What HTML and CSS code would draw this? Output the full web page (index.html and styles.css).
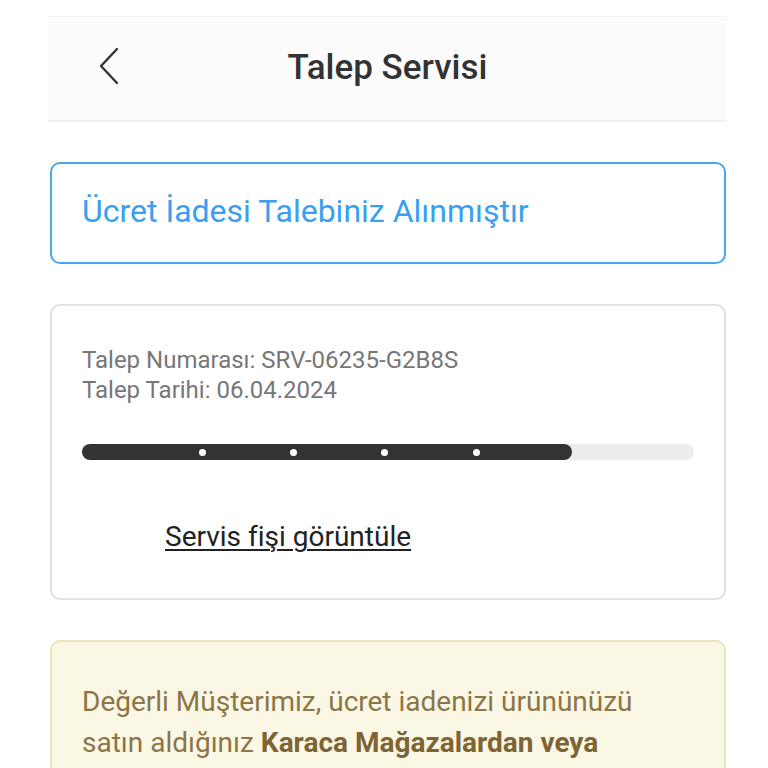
FILE: index.html
```html
<!DOCTYPE html>
<html lang="tr">
<head>
    <meta charset="UTF-8">
    <meta name="viewport" content="width=device-width, initial-scale=1.0">
    <title>Talep Servisi</title>
    <link rel="stylesheet" href="styles.css">
</head>
<body>

    <div class="page">
        <header class="top-bar">
            <a class="back" href="#" aria-label="Geri">
                <svg width="20" height="38" viewBox="0 0 20 38">
                    <polyline points="18,2 2,19 18,36" fill="none" stroke="#333" stroke-width="2.4" stroke-linecap="round" stroke-linejoin="round"/>
                </svg>
            </a>
            <h1>Talep Servisi</h1>
        </header>

        <section class="status-card">
            <h2>Ücret İadesi Talebiniz Alınmıştır</h2>
        </section>

        <section class="request-card">
            <p class="request-info">Talep Numarası: SRV-06235-G2B8S</p>
            <p class="request-info">Talep Tarihi: 06.04.2024</p>

            <div class="progress">
                <div class="progress-fill" style="width: 80%;">
                    <span class="step"></span>
                    <span class="step"></span>
                    <span class="step"></span>
                    <span class="step"></span>
                </div>
            </div>

            <a class="receipt-link" href="#">Servis fişi görüntüle</a>
        </section>

        <section class="notice-card">
            <p>Değerli Müşterimiz, ücret iadenizi ürününüzü satın aldığınız <strong>Karaca Mağazalardan veya</strong> Karaca.com üzerinden talep edebilirsiniz.</p>
        </section>
    </div>

</body>
</html>
```

FILE: styles.css
```css
body {
    font-family: Roboto, 'Noto Sans', sans-serif;
    margin: 0;
    padding: 0;
    background-color: #fff;
    color: #333;
}

.page {
    width: 679px;
    margin-left: 48px;
    padding-top: 16px;
}

/* Header */
.top-bar {
    position: relative;
    height: 103px;
    display: flex;
    align-items: center;
    justify-content: center;
    background-color: #fcfcfc;
    border-top: 1px solid #f3f3f3;
    border-bottom: 2px solid #f1f1f1;
}

.top-bar .back {
    position: absolute;
    left: 51px;
    top: 30px;
    display: block;
    line-height: 0;
}

.top-bar h1 {
    margin: 0 0 2px;
    font-size: 35px;
    font-weight: 500;
    color: #333;
}

/* Cards */
.status-card,
.request-card,
.notice-card {
    margin: 40px 1px 0 2px;
    border-radius: 10px;
    border: 2px solid #e2e2e2;
    background-color: #fff;
}

.status-card {
    height: 98px;
    display: flex;
    align-items: center;
    padding: 0 30px;
    border-color: #49a6ef;
}

.status-card h2 {
    margin: 0 0 4px;
    font-size: 32px;
    font-weight: 400;
    color: #3a9ff0;
}

.request-card {
    padding: 39px 30px 45px;
    display: flex;
    flex-direction: column;
    align-items: flex-start;
}

.request-info {
    margin: 0;
    font-size: 24px;
    line-height: 30px;
    color: #777;
}

.progress {
    align-self: stretch;
    height: 16px;
    margin-top: 39px;
    border-radius: 8px;
    background-color: #ececec;
}

.progress-fill {
    height: 100%;
    border-radius: 8px;
    background-color: #333;
    display: flex;
    align-items: center;
    justify-content: space-between;
    padding: 0 92px 0 117px;
    box-sizing: border-box;
}

.step {
    width: 7px;
    height: 7px;
    border-radius: 50%;
    background-color: #fff;
}

.receipt-link {
    margin: 61px 0 0 83px;
    font-size: 28px;
    line-height: 32px;
    color: #222;
    text-decoration: underline;
    text-underline-offset: 3px;
    text-decoration-thickness: 2px;
}

.notice-card {
    padding: 39px 30px 30px;
    background-color: #fbf7e5;
    border-color: #ece5b9;
}

.notice-card p {
    margin: 0;
    font-size: 28px;
    line-height: 41px;
    color: #8c7546;
    width: 580px;
}

.notice-card strong {
    font-weight: 700;
    color: #7d6432;
}
```
